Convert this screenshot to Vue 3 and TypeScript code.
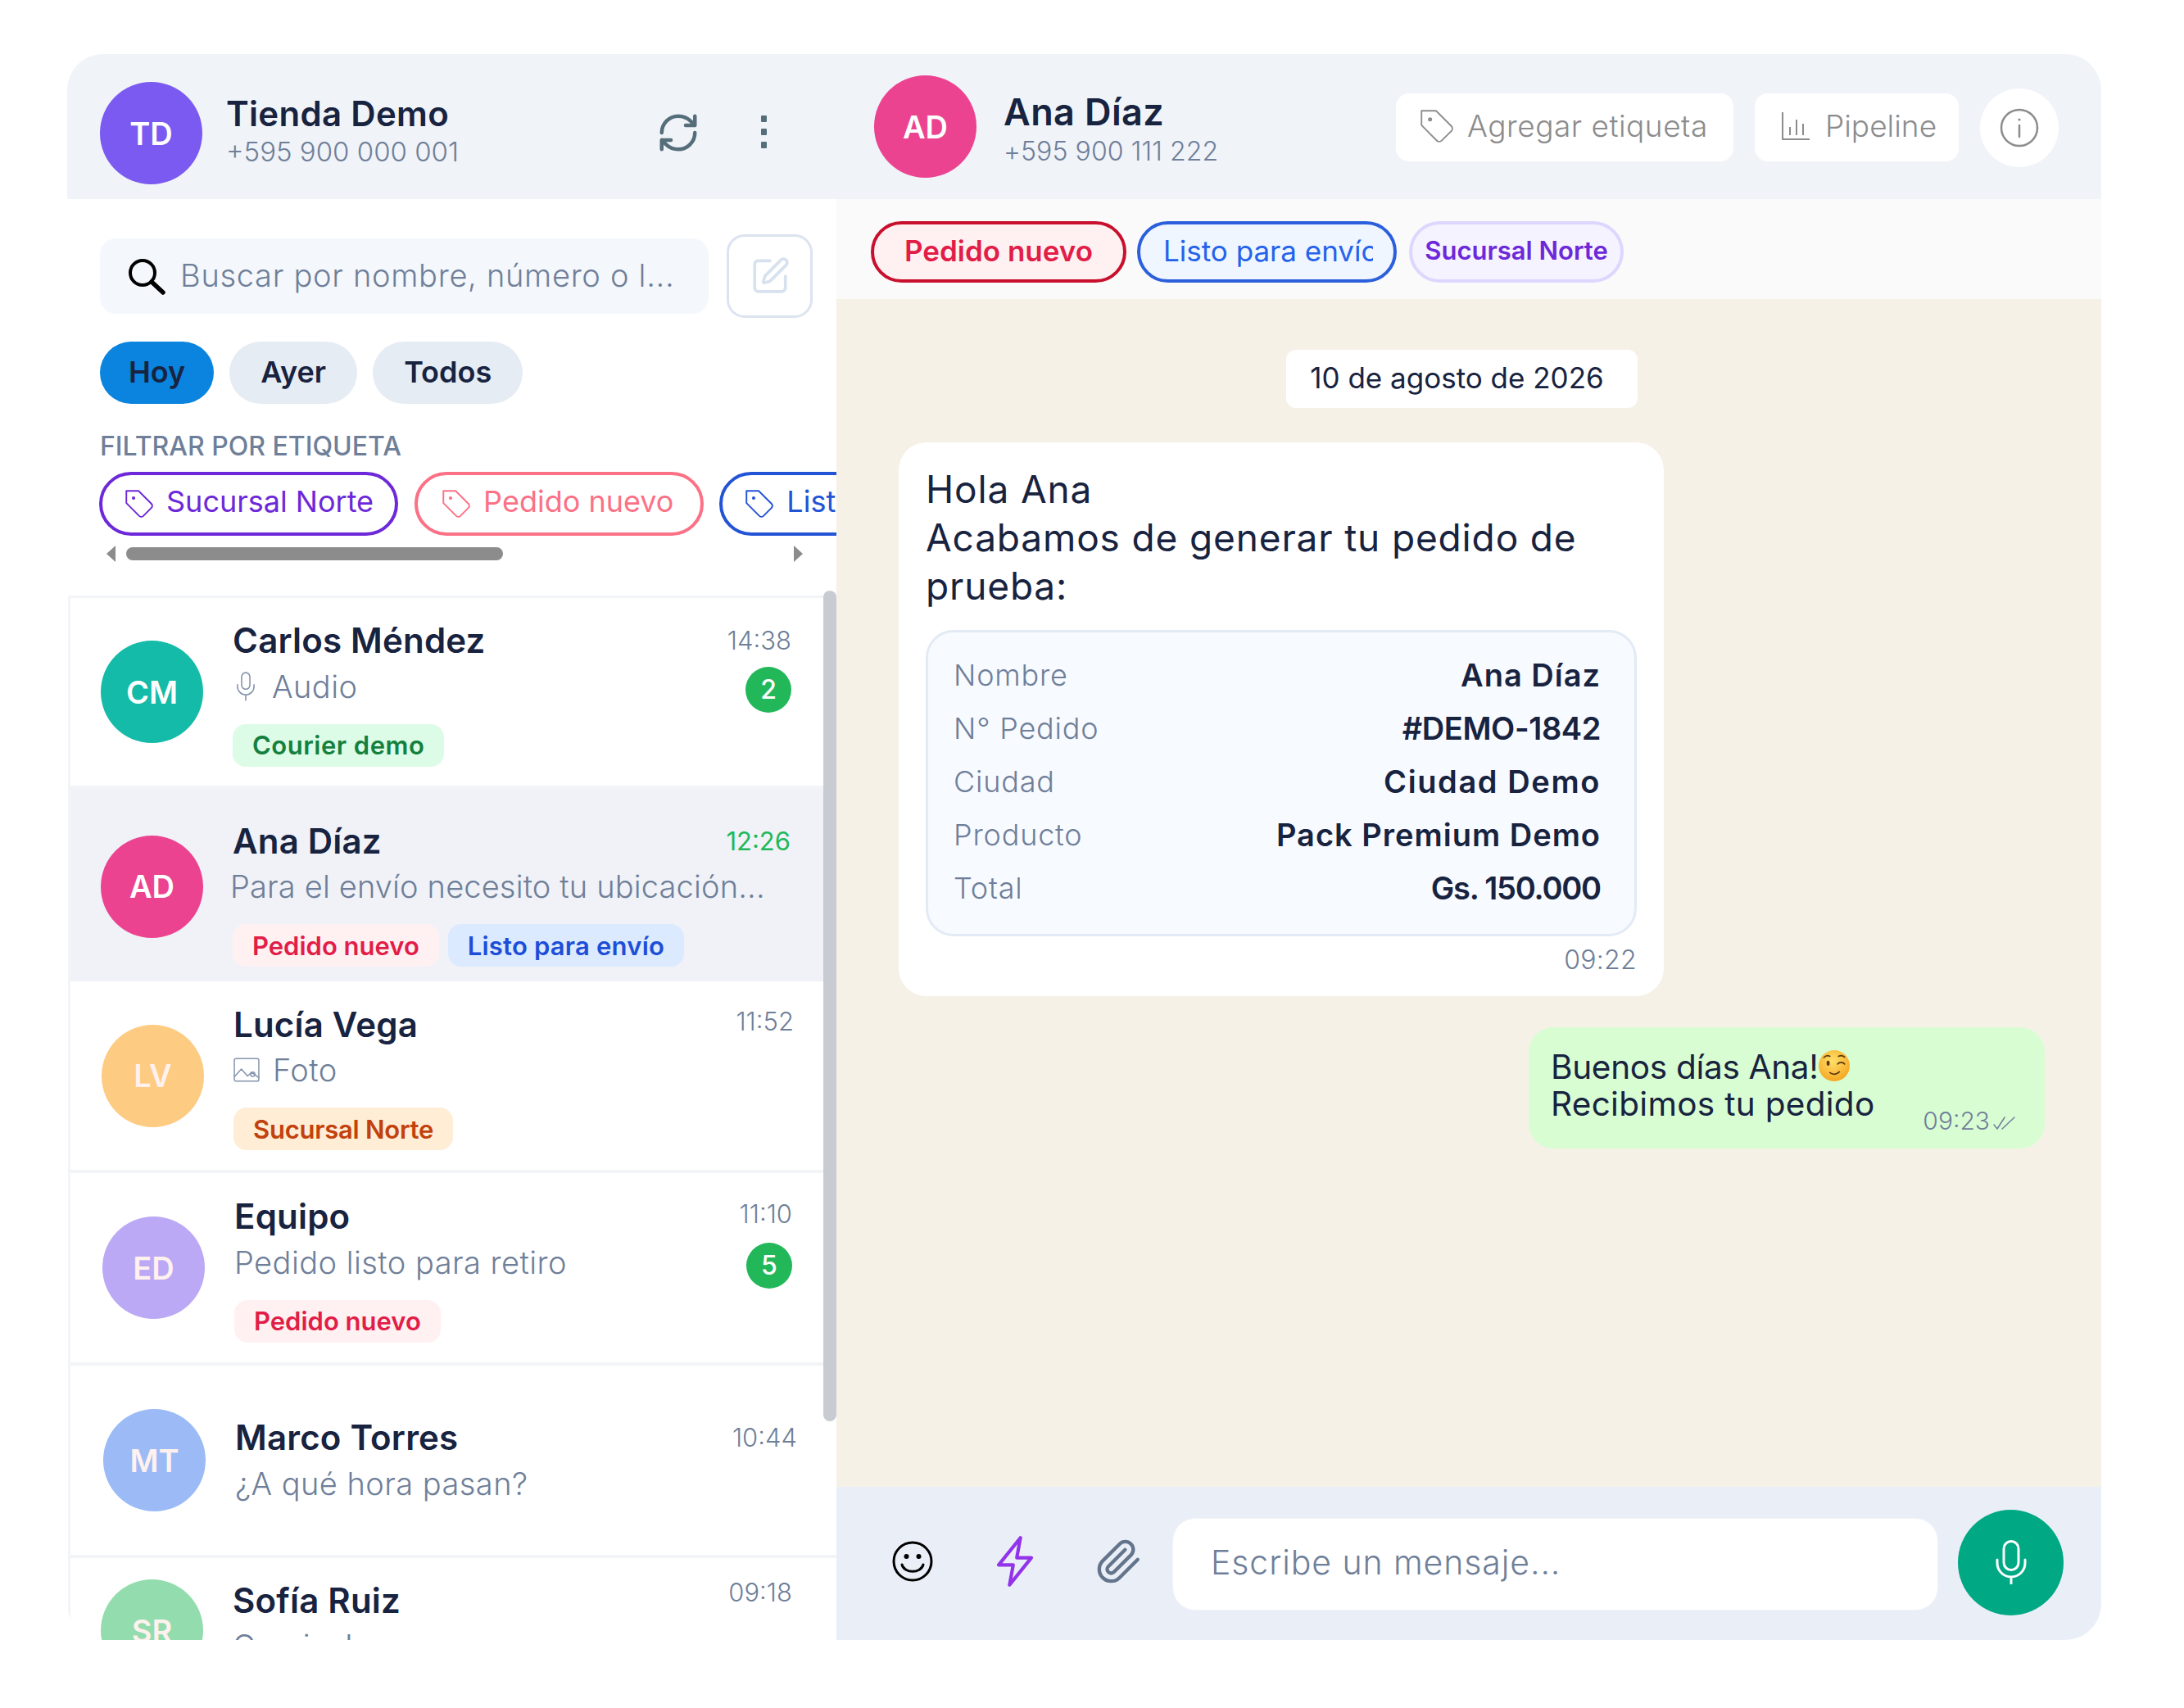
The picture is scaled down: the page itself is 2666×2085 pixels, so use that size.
<template>
  <div class="page">
    <div class="card">
      <!-- sidebar -->
      <aside class="side">
        <header class="side-head">
          <div class="avatar" style="background: #7a5af0">TD</div>
          <div class="side-who">
            <div class="who-name">Tienda Demo</div>
            <div class="who-phone">+595 900 000 001</div>
          </div>
          <svg class="ico-sync" viewBox="0 0 24 24"><path d="M3 12a9 9 0 0 1 9-9 9.75 9.75 0 0 1 6.74 2.74L21 8M21 3v5h-5M21 12a9 9 0 0 1-9 9 9.75 9.75 0 0 1-6.74-2.74L3 16M8 16H3v5" /></svg>
          <div class="kebab"><i></i><i></i><i></i></div>
        </header>

        <div class="search-row">
          <div class="search">
            <svg class="ico-search" viewBox="0 0 48 48"><circle cx="20" cy="20" r="15" /><path d="M31 31l14 13" class="handle" /></svg>
            <input class="search-input" placeholder="Buscar por nombre, número o l..." />
          </div>
          <button class="edit-btn">
            <svg viewBox="0 0 24 24"><path d="M12 3H5a2 2 0 0 0-2 2v14a2 2 0 0 0 2 2h14a2 2 0 0 0 2-2v-7" /><path d="M18.4 2.6a1 1 0 0 1 3 3l-9 9a2 2 0 0 1-.85.5l-2.87.84a.5.5 0 0 1-.62-.62l.84-2.87a2 2 0 0 1 .5-.85z" /></svg>
          </button>
        </div>

        <div class="days">
          <button v-for="d in days" :key="d" class="day" :class="{ on: d === 'Hoy' }">{{ d }}</button>
        </div>

        <div class="filter-label">FILTRAR POR ETIQUETA</div>
        <div class="filter-chips">
          <div v-for="f in filters" :key="f.text" class="fchip" :class="f.cls">
            <svg class="ico-tag" viewBox="0 0 24 24"><path d="M3 3h8.500l9 9a2 2 0 0 1 0 2.800l-5.700 5.700a2 2 0 0 1-2.800 0l-9-9V3z" /><circle cx="8" cy="8" r="1.200" class="dot" /></svg>
            <span>{{ f.text }}</span>
          </div>
        </div>
        <div class="hscroll">
          <i class="arrow left"></i>
          <div class="hthumb"></div>
          <i class="arrow right"></i>
        </div>

        <div class="vthumb"></div>
        <div class="list">
          <div
            v-for="c in chats"
            :key="c.name"
            class="row"
            :class="{ active: c.active, 'row-top': c.top }"
            :style="{ paddingLeft: c.left + 'px', paddingRight: c.right + 'px', height: c.h + 'px' }"
          >
            <div class="avatar" :class="{ pale: c.pale }" :style="{ background: c.color }">{{ c.initials }}</div>
            <div class="row-body" :style="{ marginTop: (c.bodyShift || 0) + 'px' }">
              <div class="row-line">
                <span class="row-name">{{ c.name }}</span>
                <span class="row-time" :class="{ fresh: c.active }" :style="{ marginTop: (c.timeShift || 0) + 'px' }">{{ c.time }}</span>
              </div>
              <div class="row-line">
                <span class="row-preview">
                  <svg v-if="c.icon === 'mic'" class="ico-small" viewBox="0 0 24 32"><rect x="7.500" y="1" width="9" height="18" rx="4.500" /><path d="M3 14v2a9 9 0 0 0 18 0v-2M12 25v6" /></svg>
                  <svg v-if="c.icon === 'photo'" class="ico-small" viewBox="0 0 30 30"><rect x="1" y="2" width="28" height="26" rx="2" /><path d="M1 23l8-9 7 8 5-4 8 6" /><circle cx="22" cy="20" r="2.500" /></svg>
                  {{ c.preview }}
                </span>
                <span v-if="c.unread" class="unread">{{ c.unread }}</span>
              </div>
              <div v-if="c.tags.length" class="row-tags">
                <span v-for="t in c.tags" :key="t.text" class="tag" :class="t.cls">{{ t.text }}</span>
              </div>
            </div>
          </div>
        </div>
      </aside>

      <!-- conversation -->
      <main class="chat">
        <header class="chat-head">
          <div class="avatar" style="background: #ec4391">AD</div>
          <div class="chat-who">
            <div class="who-name big">Ana Díaz</div>
            <div class="who-phone small">+595 900 111 222</div>
          </div>
          <div class="head-actions">
            <button class="ghost tag-btn">
              <svg class="ico-tag" viewBox="0 0 24 24"><path d="M3 3h8.500l9 9a2 2 0 0 1 0 2.800l-5.700 5.700a2 2 0 0 1-2.800 0l-9-9V3z" /><circle cx="8" cy="8" r="1.200" class="dot" /></svg>
              Agregar etiqueta
            </button>
            <button class="ghost pipe-btn">
              <svg class="ico-chart" viewBox="0 0 36 36"><path d="M2 1v33h33M11 19v10M19 10v19M27 15v14" /></svg>
              Pipeline
            </button>
            <button class="round-btn">
              <svg viewBox="0 0 48 48"><circle cx="24" cy="24" r="22" /><path d="M24 21v14" /><circle cx="24" cy="14" r="1.600" class="dot" /></svg>
            </button>
          </div>
        </header>

        <div class="labels">
          <span class="label red">Pedido nuevo</span>
          <span class="label blue"><span class="label-clip">Listo para envío</span></span>
          <span class="label violet">Sucursal Norte</span>
        </div>

        <div class="thread">
          <div class="date-chip">10 de agosto de 2026</div>

          <div class="bubble in">
            <p class="msg">Hola Ana<br />Acabamos de generar tu pedido de prueba:</p>
            <div class="order">
              <div v-for="o in order" :key="o.k" class="order-row">
                <span class="order-k">{{ o.k }}</span>
                <span class="order-v" :style="{ letterSpacing: o.ls + 'px' }">{{ o.v }}</span>
              </div>
            </div>
            <div class="stamp">09:22</div>
          </div>

          <div class="bubble out">
            <p class="msg-out">
              <span class="greet">Buenos días Ana!</span>
              <svg class="wink" viewBox="0 0 36 36">
                <defs>
                  <radialGradient id="face" cx="45%" cy="35%" r="70%">
                    <stop offset="0" stop-color="#ffdf6b" />
                    <stop offset="1" stop-color="#f5a31c" />
                  </radialGradient>
                </defs>
                <circle cx="18" cy="18" r="18" fill="url(#face)" />
                <ellipse cx="11" cy="15" rx="1.800" ry="3" fill="#5b3a10" />
                <path d="M22 16c2-2.500 6-2.500 8 0M6 8.500c2-2 5-2.500 7-1.500M23 7c2-1 5-1 7 1M13 26c3 2.500 8 2.500 11-1" fill="none" stroke="#5b3a10" stroke-width="1.600" stroke-linecap="round" />
              </svg>
              <br />Recibimos tu pedido
            </p>
            <div class="stamp-out">
              09:23
              <svg viewBox="0 0 27 18"><path d="M1 11l4 5L14 2M11 16L26 2" /></svg>
            </div>
          </div>
        </div>

        <footer class="composer">
          <svg class="ico-smile" viewBox="0 0 50 50"><circle cx="25" cy="25" r="23" /><circle cx="17.500" cy="19" r="3" class="dot" /><circle cx="32.500" cy="19" r="3" class="dot" /><path d="M12 29c3 11 23 11 26 0" /></svg>
          <svg class="ico-bolt" viewBox="0 0 24 28"><path d="M15 1L3 16h8l-2 11 12-15h-8l2-11z" /></svg>
          <svg class="ico-clip" viewBox="0 0 24 24"><path d="M21.440 11.050l-9.190 9.190a6 6 0 0 1-8.490-8.490l8.570-8.570A4 4 0 1 1 18 8.840l-8.590 8.570a2 2 0 0 1-2.830-2.830l8.490-8.480" /></svg>
          <input class="composer-input" placeholder="Escribe un mensaje..." />
          <button class="send">
            <svg viewBox="0 0 38 54"><rect x="10" y="1.500" width="18" height="35" rx="9" /><path d="M2 24v4a17 17 0 0 0 34 0v-4M19 45v8" /></svg>
          </button>
        </footer>
      </main>
    </div>
  </div>
</template>

<script setup lang="ts">
interface Tag {
  text: string
  cls: string
}

interface Chat {
  initials: string
  color: string
  pale?: boolean
  name: string
  time: string
  timeShift?: number
  preview: string
  icon?: 'mic' | 'photo'
  unread?: number
  tags: Tag[]
  active?: boolean
  top?: boolean
  bodyShift?: number
  left: number
  right: number
  h: number
}

const days = ['Hoy', 'Ayer', 'Todos']

const filters = [
  { text: 'Sucursal Norte', cls: 'violet' },
  { text: 'Pedido nuevo', cls: 'rose' },
  { text: 'Listo para envío', cls: 'blue' },
]

const chats: Chat[] = [
  {
    initials: 'CM', color: '#14bba8', name: 'Carlos Méndez', time: '14:38', preview: 'Audio', icon: 'mic', unread: 2,
    tags: [{ text: 'Courier demo', cls: 'green' }], left: 37, right: 55, h: 233,
  },
  {
    initials: 'AD', color: '#ec4391', name: 'Ana Díaz', time: '12:26', preview: 'Para el envío necesito tu ubicación...',
    tags: [{ text: 'Pedido nuevo', cls: 'red' }, { text: 'Listo para envío', cls: 'blue' }],
    active: true, bodyShift: 14, left: 37, right: 56, h: 235,
  },
  {
    initials: 'LV', color: '#fdcb82', pale: true, name: 'Lucía Vega', time: '11:52', timeShift: -8, preview: 'Foto', icon: 'photo',
    tags: [{ text: 'Sucursal Norte', cls: 'orange' }], left: 38, right: 52, h: 234,
  },
  {
    initials: 'ED', color: '#bba9f5', pale: true, name: 'Equipo', time: '11:10', timeShift: -6, preview: 'Pedido listo para retiro', unread: 5,
    tags: [{ text: 'Pedido nuevo', cls: 'red' }], left: 39, right: 54, h: 235,
  },
  {
    initials: 'MT', color: '#9cbbf6', pale: true, name: 'Marco Torres', time: '10:44', preview: '¿A qué hora pasan?',
    tags: [], left: 40, right: 48, h: 235,
  },
  {
    initials: 'SR', color: '#92dcae', pale: true, name: 'Sofía Ruiz', time: '09:18', timeShift: -20, preview: 'Gracias!',
    tags: [], top: true, bodyShift: -3, left: 37, right: 54, h: 234,
  },
]

// letter-spacing per value keeps each right-hand cell at its measured width
const order = [
  { k: 'Nombre', v: 'Ana Díaz', ls: 1 },
  { k: 'N° Pedido', v: '#DEMO-1842', ls: -0.4 },
  { k: 'Ciudad', v: 'Ciudad Demo', ls: 1.6 },
  { k: 'Producto', v: 'Pack Premium Demo', ls: 1 },
  { k: 'Total', v: 'Gs. 150.000', ls: -1.2 },
]
</script>

<style>
html,
body {
  margin: 0;
  background: #fff;
}
</style>

<style scoped>
.page {
  width: 2666px;
  height: 2085px;
  padding: 66px 0 0 82px;
  box-sizing: border-box;
  font-family: Inter, "Liberation Sans", sans-serif;
  color: #18233f;
}

.card {
  display: flex;
  width: 2483px;
  height: 1936px;
  border-radius: 44px;
  overflow: hidden;
  background: #fff;
}

svg {
  fill: none;
  stroke: currentColor;
  stroke-linecap: round;
  stroke-linejoin: round;
  flex-shrink: 0;
}

button {
  font-family: inherit;
  border: none;
  padding: 0;
}

.avatar {
  width: 125px;
  height: 125px;
  border-radius: 50%;
  flex-shrink: 0;
  display: flex;
  align-items: center;
  justify-content: center;
  color: #fff;
  font-size: 38px;
  font-weight: 600;
}

.avatar.pale {
  color: #fff1ee;
}

/* sidebar */
.side {
  position: relative;
  width: 939px;
  flex-shrink: 0;
  display: flex;
  flex-direction: column;
  overflow: hidden;
}

.side-head {
  height: 177px;
  box-sizing: border-box;
  flex-shrink: 0;
  padding: 34px 0 0 40px;
  background: #f0f3f8;
  display: flex;
  align-items: flex-start;
}

.side-who {
  margin-left: 29px;
  flex: 1;
  padding-top: 11px;
}

.who-name {
  font-size: 42px;
  font-weight: 600;
  line-height: 56px;
  letter-spacing: 0.3px;
  color: #18233f;
}

.who-name.big {
  font-size: 45px;
  letter-spacing: 0.4px;
}

.who-phone {
  margin-top: -10px;
  font-size: 33px;
  line-height: 56px;
  font-weight: 300;
  color: #6f7f99;
}

.who-phone.small {
  margin-top: -8px;
  font-size: 32px;
  letter-spacing: 0.1px;
}

.ico-sync {
  width: 54px;
  height: 54px;
  color: #546e7a;
  stroke-width: 2;
  margin: 35px 74px 0 0;
}

.kebab {
  display: flex;
  flex-direction: column;
  gap: 8px;
  margin: 41px 85px 0 0;
}

.kebab i {
  display: block;
  width: 7px;
  height: 8px;
  border-radius: 1px;
  background: #546e7a;
}

.search-row {
  display: flex;
  align-items: center;
  gap: 22px;
  padding: 43px 0 0 40px;
}

.search {
  width: 743px;
  height: 92px;
  border-radius: 20px;
  background: #f4f7fb;
  display: flex;
  align-items: center;
  padding-left: 32px;
  box-sizing: border-box;
}

.ico-search {
  width: 48px;
  height: 48px;
  color: #000;
  stroke-width: 4;
}

.ico-search .handle {
  stroke-width: 5.500;
}

.search-input {
  flex: 1;
  min-width: 0;
  margin: -2px 0 0 18px;
  border: none;
  outline: none;
  background: none;
  font-family: inherit;
  font-size: 38px;
  letter-spacing: 0.7px;
  font-weight: 300;
  color: #6f7f99;
  padding: 0;
}

.search-input::placeholder {
  color: #6f7f99;
  opacity: 1;
}

.edit-btn {
  width: 105px;
  height: 102px;
  box-sizing: border-box;
  border: 3px solid #dbe4f0;
  border-radius: 22px;
  background: #fff;
  display: flex;
  align-items: center;
  justify-content: center;
}

.edit-btn svg {
  width: 50px;
  height: 50px;
  color: #d8e2ef;
  stroke-width: 1.800;
}

.days {
  display: flex;
  gap: 19px;
  padding: 29px 0 0 40px;
}

.day {
  height: 76px;
  padding: 0 38px 2px;
  border-radius: 38px;
  background: #e5ecf4;
  color: #18233f;
  font-size: 36px;
  font-weight: 600;
}

.day.on {
  background: #0a84de;
  padding: 0 35px 2px;
}

.filter-label {
  margin: 32px 0 0 40px;
  font-size: 32px;
  line-height: 40px;
  font-weight: 500;
  color: #6f7f99;
}

.filter-chips {
  display: flex;
  gap: 20px;
  margin: 11px 0 0 39px;
  white-space: nowrap;
}

.fchip {
  height: 78px;
  box-sizing: border-box;
  flex-shrink: 0;
  border: 4px solid currentColor;
  border-radius: 39px;
  padding: 0 26px 7px 24px;
  display: flex;
  align-items: center;
  gap: 12px;
  font-size: 36px;
  font-weight: 400;
  background: #fff;
}

.fchip.violet {
  color: #6d28d9;
}

.fchip.rose {
  color: #fb7185;
  padding-left: 26px;
  padding-right: 33px;
}

.fchip.blue {
  color: #2454d6;
  margin-left: -1px;
}

.fchip .ico-tag {
  width: 42px;
  height: 42px;
  margin-top: 7px;
  stroke-width: 1.100;
}

.ico-tag .dot,
svg .dot {
  fill: currentColor;
  stroke: none;
}

.hscroll {
  display: flex;
  align-items: center;
  margin: 14px 0 0 48px;
  height: 16px;
  width: 850px;
}

.arrow {
  display: block;
  width: 0;
  height: 0;
  border-top: 10px solid transparent;
  border-bottom: 10px solid transparent;
}

.arrow.left {
  border-right: 11px solid #8c8c8c;
}

.arrow.right {
  border-left: 11px solid #8c8c8c;
  margin-left: auto;
}

.hthumb {
  width: 460px;
  height: 16px;
  margin-left: 13px;
  border-radius: 8px;
  background: #8c8c8c;
}

.vthumb {
  position: absolute;
  top: 655px;
  right: 0;
  width: 16px;
  height: 1014px;
  border-radius: 8px;
  background: #c8ccd2;
  z-index: 2;
}

.list {
  flex: 1;
  min-height: 0;
  margin: 43px 0 0 1px;
  border-top: 3px solid #f2f4f8;
  border-left: 3px solid #f2f4f8;
  overflow: hidden;
}

.row {
  box-sizing: border-box;
  display: flex;
  align-items: center;
  gap: 36px;
  border-bottom: 4px solid #f2f4f8;
}

.row.active {
  background: #f0f2f7;
  border-bottom: none;
  padding-top: 3px;
}

.row.active .row-preview {
  margin-left: -3px;
  letter-spacing: 0.15px;
}

.row.row-top {
  align-items: flex-start;
  padding-top: 26px;
}

.row-body {
  flex: 1;
  min-width: 0;
}

.row-line {
  display: flex;
  align-items: center;
  justify-content: space-between;
  height: 56px;
}

.row-name {
  font-size: 42px;
  font-weight: 600;
  letter-spacing: 0.2px;
  color: #18233f;
}

.row-time {
  font-size: 31px;
  font-weight: 300;
  color: #6f7f99;
}

.row-time.fresh {
  color: #22b85a;
  font-weight: 400;
}

.row-preview {
  display: flex;
  align-items: center;
  gap: 16px;
  font-size: 38px;
  letter-spacing: 0.45px;
  font-weight: 300;
  color: #6f7f99;
  white-space: nowrap;
}

.ico-small {
  width: 32px;
  height: 36px;
  color: #8594ab;
  stroke-width: 1.400;
}

.unread {
  width: 56px;
  height: 56px;
  margin-top: 8px;
  border-radius: 50%;
  background: #22b85a;
  color: #fff;
  font-size: 32px;
  font-weight: 500;
  display: flex;
  align-items: center;
  justify-content: center;
}

.row-tags {
  display: flex;
  gap: 11px;
  margin-top: 18px;
}

.tag {
  height: 52px;
  padding: 0 24px;
  border-radius: 16px;
  display: flex;
  align-items: center;
  font-size: 31px;
  font-weight: 600;
}

.tag.green {
  background: #dcfce7;
  color: #15803d;
  letter-spacing: 0.5px;
}

.tag.red {
  background: #fff1f2;
  color: #e11d48;
}

.tag.blue {
  background: #dbeafe;
  color: #1d4ed8;
  letter-spacing: 0.2px;
}

.tag.orange {
  background: #ffedd5;
  color: #c2410c;
  letter-spacing: -0.25px;
}

/* conversation */
.chat {
  flex: 1;
  min-width: 0;
  display: flex;
  flex-direction: column;
}

.chat-head {
  height: 177px;
  box-sizing: border-box;
  flex-shrink: 0;
  background: #f0f3f8;
  padding: 26px 52px 0 46px;
  display: flex;
  align-items: flex-start;
}

.chat-who {
  margin-left: 33px;
  flex: 1;
  padding-top: 17px;
}

.head-actions {
  display: flex;
  align-items: center;
  padding-top: 16px;
  gap: 26px;
}

.ghost {
  height: 83px;
  margin-top: -2px;
  box-sizing: border-box;
  border-radius: 16px;
  background: #fff;
  color: #8c8c8c;
  display: flex;
  align-items: center;
  font-size: 37px;
  letter-spacing: 0.5px;
  font-weight: 300;
  white-space: nowrap;
  padding-bottom: 3px;
}

.tag-btn {
  width: 412px;
  padding-left: 25px;
  gap: 12px;
}

.tag-btn .ico-tag {
  width: 50px;
  height: 50px;
  stroke-width: 0.900;
}

.pipe-btn {
  width: 249px;
  padding-left: 32px;
  gap: 18px;
  letter-spacing: 0;
}

.ico-chart {
  width: 36px;
  height: 36px;
  stroke-width: 2;
  stroke-linecap: butt;
}

.round-btn {
  width: 96px;
  height: 96px;
  border-radius: 50%;
  background: #fff;
  color: #8c8c8c;
  display: flex;
  align-items: center;
  justify-content: center;
}

.round-btn svg {
  width: 48px;
  height: 48px;
  stroke-width: 2.500;
}

.labels {
  height: 122px;
  box-sizing: border-box;
  flex-shrink: 0;
  background: #fafafa;
  padding: 6px 0 0 42px;
  display: flex;
  align-items: center;
  gap: 13px;
  white-space: nowrap;
}

.label {
  height: 75px;
  box-sizing: border-box;
  border: 4px solid;
  border-radius: 38px;
  display: flex;
  align-items: center;
  font-size: 35px;
  padding-bottom: 3px;
}

.label.red {
  width: 312px;
  justify-content: center;
  border-color: #c8102e;
  background: #fff1f2;
  color: #e11d48;
  font-weight: 600;
}

.label.blue {
  width: 317px;
  padding-left: 28px;
  border-color: #2c5fdc;
  background: #eff6ff;
  color: #2563eb;
}

.label-clip {
  width: 256px;
  overflow: hidden;
}

.label.violet {
  width: 262px;
  justify-content: center;
  margin-left: 2px;
  border-color: #ddd6fe;
  background: #f5f3ff;
  color: #6d28d9;
  font-size: 31px;
  font-weight: 600;
}

.thread {
  flex: 1;
  min-height: 0;
  background: #f5f1e7;
  display: flex;
  flex-direction: column;
  padding: 62px 69px 0 76px;
}

.date-chip {
  align-self: center;
  margin-right: 24px;
  height: 71px;
  padding: 0 41px 3px 29px;
  box-sizing: border-box;
  border-radius: 12px;
  background: #fff;
  display: flex;
  align-items: center;
  font-size: 35px;
}

.bubble {
  box-sizing: border-box;
  background: #fff;
}

.bubble.in {
  width: 934px;
  margin-top: 42px;
  padding: 28px 33px 0 33px;
  height: 676px;
  border-radius: 34px;
}

.msg {
  margin: 0;
  font-size: 46px;
  letter-spacing: 0.85px;
  line-height: 59px;
  font-weight: 400;
  color: #18233f;
}

.order {
  margin: 24px 0 0 0;
  width: 868px;
  height: 374px;
  box-sizing: border-box;
  border: 3px solid #e2ebf5;
  border-radius: 34px;
  background: #f7faff;
  padding: 19px 41px 0 31px;
}

.order-row {
  display: flex;
  align-items: center;
  justify-content: space-between;
  height: 65px;
}

.order-k {
  font-size: 36px;
  letter-spacing: 0.8px;
  font-weight: 300;
  color: #6f7f99;
}

.order-v {
  font-size: 38px;
  font-weight: 600;
  color: #18233f;
}

.stamp {
  margin-top: 9px;
  text-align: right;
  font-size: 32px;
  letter-spacing: 0.3px;
  font-weight: 300;
  color: #6f7f99;
}

.bubble.out {
  position: relative;
  align-self: flex-end;
  width: 630px;
  height: 148px;
  margin-top: 38px;
  padding: 26px 0 0 27px;
  border-radius: 30px;
  background: #d9fdd3;
}

.msg-out {
  margin: 0;
  font-size: 40.500px;
  letter-spacing: 0.3px;
  line-height: 45px;
  color: #18233f;
}

.greet {
  letter-spacing: -0.3px;
}

.wink {
  width: 38px;
  height: 38px;
  vertical-align: -3px;
  stroke: none;
}

.stamp-out {
  position: absolute;
  right: 36px;
  bottom: 16px;
  display: flex;
  align-items: center;
  gap: 4px;
  font-size: 30px;
  font-weight: 300;
  color: #6f7f99;
}

.stamp-out svg {
  width: 27px;
  height: 18px;
  stroke-width: 1.500;
  margin-top: 6px;
}

.composer {
  height: 187px;
  box-sizing: border-box;
  flex-shrink: 0;
  background: #eaeff7;
  padding: 2px 46px 0 68px;
  display: flex;
  align-items: center;
}

.ico-smile {
  width: 50px;
  height: 50px;
  margin-top: -7px;
  color: #000;
  stroke-width: 3;
}

.ico-bolt {
  width: 54px;
  height: 62px;
  margin: -7px 0 0 73px;
  color: #9333ea;
  stroke-width: 1.900;
}

.ico-clip {
  width: 58px;
  height: 58px;
  margin: -7px 0 0 71px;
  color: #64748b;
  stroke-width: 1.800;
}

.composer-input {
  flex: 1;
  min-width: 0;
  height: 113px;
  box-sizing: border-box;
  margin: 0 24px 0 36px;
  border: 1px solid #f0f3f8;
  border-radius: 28px;
  outline: none;
  background: #fff;
  padding: 0 0 5px 46px;
  font-family: inherit;
  font-size: 41px;
  letter-spacing: 0.9px;
  font-weight: 300;
}

.composer-input::placeholder {
  color: #6f7f99;
  opacity: 1;
}

.send {
  width: 129px;
  height: 129px;
  margin-top: -5px;
  border-radius: 50%;
  background: #00a884;
  color: #fff;
  display: flex;
  align-items: center;
  justify-content: center;
  flex-shrink: 0;
}

.send svg {
  width: 38px;
  height: 54px;
  stroke-width: 3;
}
</style>
